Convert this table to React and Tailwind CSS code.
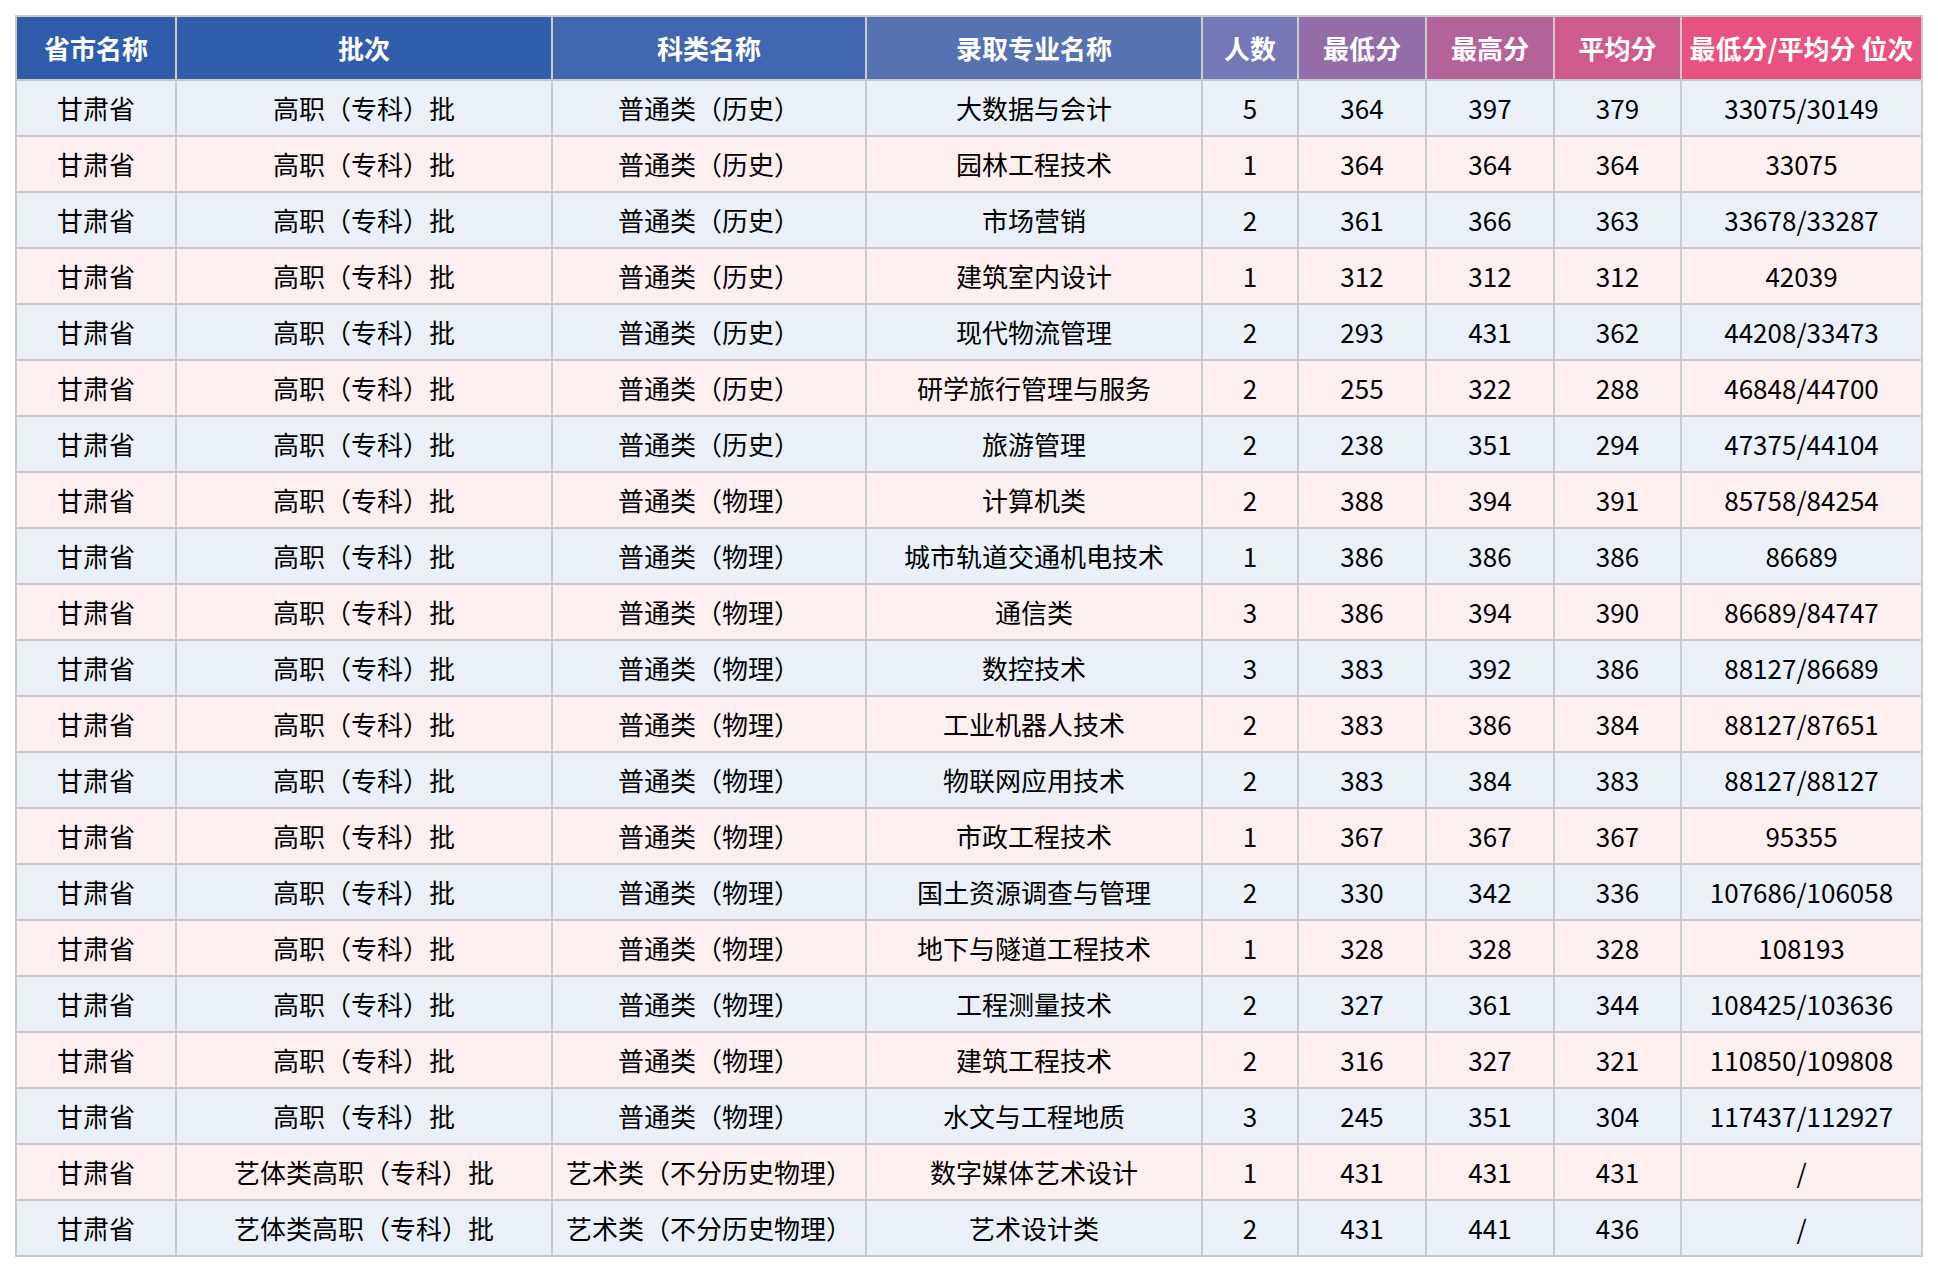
import React from "react";

const head = [
  { t: "省市名称", w: "w-[160px]", bg: "bg-[#2e5eab]" },
  { t: "批次", w: "w-[376px]", bg: "bg-[#2f5eab]" },
  { t: "科类名称", w: "w-[314px]", bg: "bg-[#4067b0]" },
  { t: "录取专业名称", w: "w-[336px]", bg: "bg-[#5672b3]" },
  { t: "人数", w: "w-[96px]", bg: "bg-[#7478b6]" },
  { t: "最低分", w: "w-[128px]", bg: "bg-[#946ca8]" },
  { t: "最高分", w: "w-[128px]", bg: "bg-[#b4629a]" },
  { t: "平均分", w: "w-[127px]", bg: "bg-[#d15a8c]" },
  { t: "最低分/平均分 位次", w: "w-[241px]", bg: "bg-[#e8527e]" },
];

const H = "高职（专科）批";
const A = "艺体类高职（专科）批";
const L = "普通类（历史）";
const P = "普通类（物理）";
const Y = "艺术类（不分历史物理）";

const rows = [
  [H, L, "大数据与会计", "5", "364", "397", "379", "33075/30149"],
  [H, L, "园林工程技术", "1", "364", "364", "364", "33075"],
  [H, L, "市场营销", "2", "361", "366", "363", "33678/33287"],
  [H, L, "建筑室内设计", "1", "312", "312", "312", "42039"],
  [H, L, "现代物流管理", "2", "293", "431", "362", "44208/33473"],
  [H, L, "研学旅行管理与服务", "2", "255", "322", "288", "46848/44700"],
  [H, L, "旅游管理", "2", "238", "351", "294", "47375/44104"],
  [H, P, "计算机类", "2", "388", "394", "391", "85758/84254"],
  [H, P, "城市轨道交通机电技术", "1", "386", "386", "386", "86689"],
  [H, P, "通信类", "3", "386", "394", "390", "86689/84747"],
  [H, P, "数控技术", "3", "383", "392", "386", "88127/86689"],
  [H, P, "工业机器人技术", "2", "383", "386", "384", "88127/87651"],
  [H, P, "物联网应用技术", "2", "383", "384", "383", "88127/88127"],
  [H, P, "市政工程技术", "1", "367", "367", "367", "95355"],
  [H, P, "国土资源调查与管理", "2", "330", "342", "336", "107686/106058"],
  [H, P, "地下与隧道工程技术", "1", "328", "328", "328", "108193"],
  [H, P, "工程测量技术", "2", "327", "361", "344", "108425/103636"],
  [H, P, "建筑工程技术", "2", "316", "327", "321", "110850/109808"],
  [H, P, "水文与工程地质", "3", "245", "351", "304", "117437/112927"],
  [A, Y, "数字媒体艺术设计", "1", "431", "431", "431", "/"],
  [A, Y, "艺术设计类", "2", "431", "441", "436", "/"],
];

export default function App() {
  return (
    <div
      className="w-[1938px] h-[1272px] bg-white pt-[15px] pl-[15px]"
      style={{ fontFamily: '"Noto Sans CJK SC", "Noto Sans", sans-serif' }}
    >
      <table className="table-fixed border-collapse w-[1908px] border-2 border-[#cbcbcb]">
        <thead>
          <tr className="h-[64px]">
            {head.map((h, i) => (
              <th
                key={i}
                className={`${h.w} ${h.bg} border-2 border-[#cbcbcb] text-white font-bold text-[26px] text-center align-middle px-0 pt-0 pb-[2px] whitespace-nowrap`}
              >
                {h.t}
              </th>
            ))}
          </tr>
        </thead>
        <tbody>
          {rows.map((r, i) => (
            <tr
              key={i}
              className={`h-[56px] ${i % 2 === 0 ? "bg-[#e9f0f8]" : "bg-[#fdeeef]"}`}
            >
              <td className="border-2 border-[#cbcbcb] text-center align-middle text-[26px] text-[#000] px-0 pt-0 pb-[2px]">
                甘肃省
              </td>
              {r.map((c, j) => (
                <td
                  key={j}
                  className="border-2 border-[#cbcbcb] text-center align-middle text-[26px] text-[#000] px-0 pt-0 pb-[2px] whitespace-nowrap"
                >
                  {c}
                </td>
              ))}
            </tr>
          ))}
        </tbody>
      </table>
    </div>
  );
}
